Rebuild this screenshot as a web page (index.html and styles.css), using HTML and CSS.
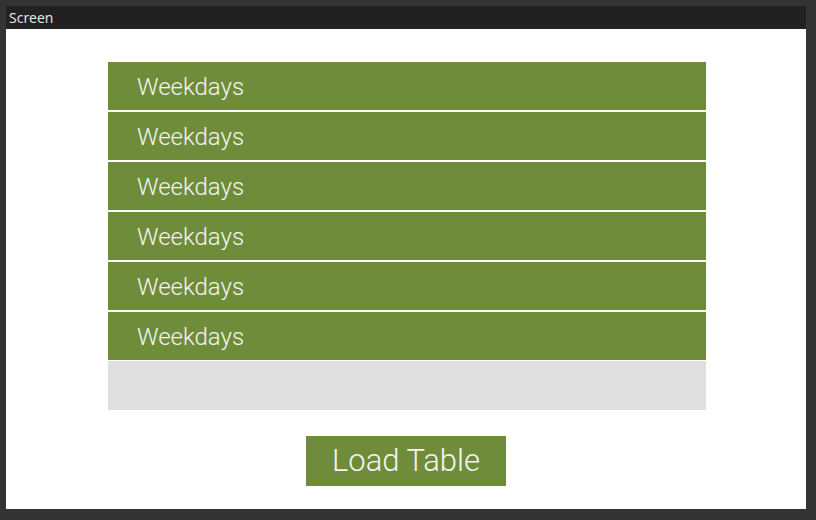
FILE: index.html
```html
<!DOCTYPE html>
<html>
<head>
<meta charset="utf-8">
<link rel="stylesheet" href="styles.css">
</head>
<body>
<div class="window">
  <div class="titlebar">Screen</div>
  <div class="content">
    <div class="table">
      <div class="row">Weekdays</div>
      <div class="row">Weekdays</div>
      <div class="row">Weekdays</div>
      <div class="row">Weekdays</div>
      <div class="row">Weekdays</div>
      <div class="row">Weekdays</div>
      <div class="row empty"></div>
    </div>
    <div class="button">Load Table</div>
  </div>
</div>
</body>
</html>
```
FILE: styles.css
```css
html, body {
  margin: 0;
  padding: 0;
  background: #333333;
  width: 816px;
  height: 520px;
  overflow: hidden;
}
.window {
  margin: 6px 10px 0 6px;
  width: 800px;
  display: flex;
  flex-direction: column;
}
.titlebar {
  height: 23px;
  background: #212121;
  color: #ececec;
  font-family: "Open Sans", "DejaVu Sans", sans-serif;
  font-size: 14px;
  line-height: 23px;
  padding-left: 3px;
}
.content {
  background: #ffffff;
  height: 480px;
  display: flex;
  flex-direction: column;
  align-items: center;
  padding-top: 33px;
  box-sizing: border-box;
}
.table {
  width: 598px;
  margin-left: 2px;
  display: flex;
  flex-direction: column;
}
.row {
  height: 47px;
  padding-top: 1px;
  margin-bottom: 2px;
  background: #6e8c3a;
  color: #f4f4f4;
  font-family: Roboto, "Liberation Sans", sans-serif;
  font-weight: 300;
  font-size: 24px;
  line-height: 48px;
  padding-left: 29px;
}
.row.empty {
  background: #dfdfdf;
  height: 49px;
  padding-top: 0;
  margin-top: -1px;
  margin-bottom: 0;
}
.button {
  margin-top: 26px;
  width: 200px;
  height: 50px;
  background: #6e8c3a;
  color: #f4f4f4;
  font-family: Roboto, "Liberation Sans", sans-serif;
  font-weight: 300;
  font-size: 31px;
  line-height: 50px;
  text-align: center;
}
```
